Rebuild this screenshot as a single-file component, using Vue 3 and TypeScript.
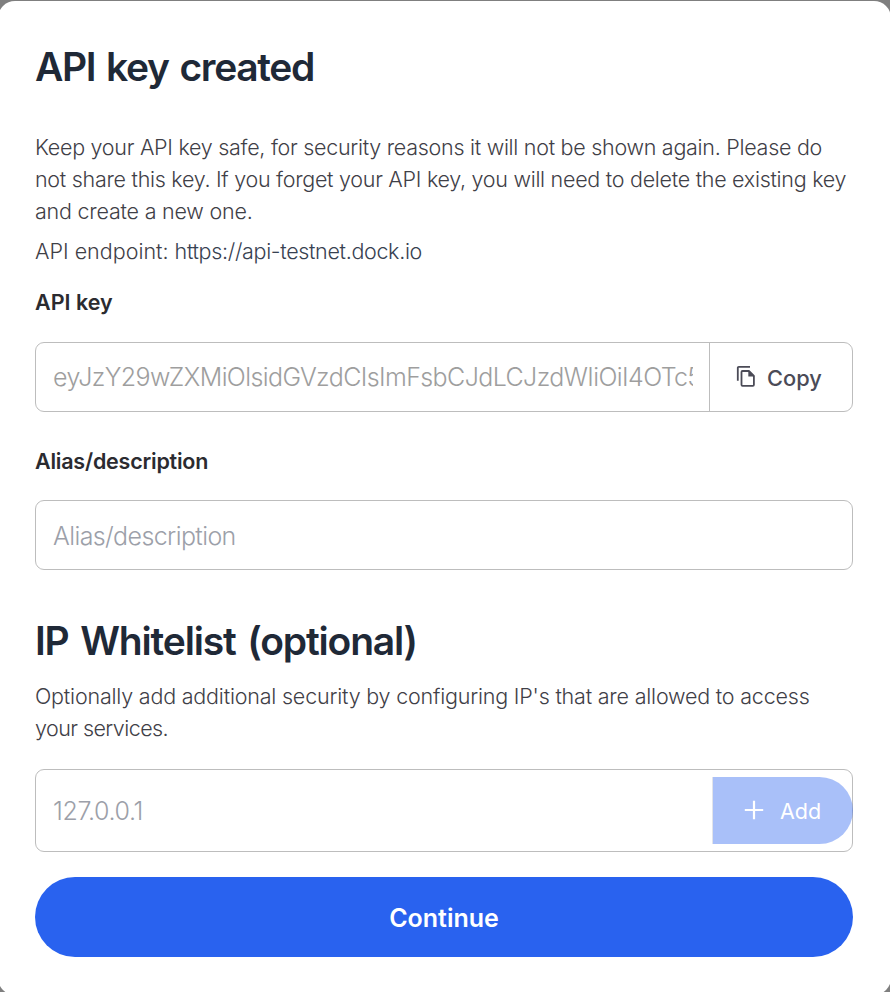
<script setup lang="ts">
import { ref } from 'vue'

const apiKey = ref('eyJzY29wZXMiOlsidGVzdCIsImFsbCJdLCJzdWIiOiI4OTc5')
const endpoint = 'https://api-testnet.dock.io'
const alias = ref('')
const ip = ref('')
</script>

<template>
  <div class="backdrop">
    <main class="modal">
      <h1 class="title">API key created</h1>

      <p class="text intro">
        <span class="line">Keep your API key safe, for security reasons it will not be shown again. Please do</span>
        <span class="line">not share this key. If you forget your API key, you will need to delete the existing key</span>
        <span class="line line-short">and create a new one.</span>
      </p>
      <p class="text endpoint">API endpoint: <a class="link">{{ endpoint }}</a></p>

      <label class="label" for="key">API key</label>
      <div class="field key-field">
        <input id="key" class="input key-input" :value="apiKey" disabled />
        <button class="copy" type="button">
          <svg class="copy-icon" width="20" height="23" viewBox="0 0 20 23" fill="none" stroke="currentColor" stroke-width="1.8">
            <path d="M14 1.8H2.8a1 1 0 0 0-1 1V15.8" />
            <path d="M12.9 6H6.5a1 1 0 0 0-1 1V19.8a1 1 0 0 0 1 1H16.9a1 1 0 0 0 1-1V11Z" stroke-linejoin="round" />
            <path d="M12.3 5.6V11.6H18.3Z" fill="currentColor" stroke="none" />
          </svg>
          <span>Copy</span>
        </button>
      </div>

      <label class="label alias-label" for="alias">Alias/description</label>
      <div class="field alias-field">
        <input id="alias" v-model="alias" class="input alias-input" placeholder="Alias/description" />
      </div>

      <h2 class="title subtitle">IP Whitelist (optional)</h2>
      <p class="text whitelist">
        <span class="line">Optionally add additional security by configuring IP's that are allowed to access</span>
        <span class="line line-last">your services.</span>
      </p>

      <div class="field ip-field">
        <input v-model="ip" class="input ip-input" placeholder="127.0.0.1" />
        <button class="add" type="button">
          <svg width="20" height="20" viewBox="0 0 20 20" stroke="currentColor" stroke-width="2.2">
            <path d="M10 .8v18.4M.8 10h18.4" />
          </svg>
          <span>Add</span>
        </button>
      </div>

      <button class="continue" type="button">Continue</button>
    </main>
  </div>
</template>

<style>
body {
  margin: 0;
  overflow: hidden;
}
</style>

<style scoped>
.backdrop {
  box-sizing: border-box;
  height: 992px;
  padding-top: 1px;
  overflow: hidden;
  background: #7f7f7f;
  font-family: Inter, "Liberation Sans", sans-serif;
}

.modal {
  box-sizing: border-box;
  display: flex;
  flex-direction: column;
  width: 893px;
  height: 994px;
  margin-left: -2px;
  padding: 42px 38px 0 37px;
  border-radius: 17px;
  background: #fff;
}

.title {
  margin: 0;
  color: #1f2937;
  font-size: 39px;
  font-weight: 600;
  line-height: 48px;
  letter-spacing: -1.36px;
  word-spacing: 2.4px;
  white-space: nowrap;
}

.text {
  margin: 0;
  color: #3f4047;
  font-size: 21.5px;
  font-weight: 300;
  line-height: 32px;
  white-space: nowrap;
}

.intro {
  margin-top: 40px;
  letter-spacing: -0.28px;
}

.line {
  display: block;
}

.line-short {
  letter-spacing: -0.22px;
}

.endpoint {
  margin-top: 8px;
}

.link {
  color: #374151;
  letter-spacing: -0.33px;
}

.label {
  margin-top: 19px;
  color: #2b2b30;
  font-size: 21.5px;
  font-weight: 600;
  line-height: 32px;
}

.alias-label {
  margin-top: 33px;
  letter-spacing: -0.22px;
}

.field {
  box-sizing: border-box;
  display: flex;
  align-items: center;
  height: 70px;
  border: 1px solid #bdbdbd;
  border-radius: 9px;
}

.key-field {
  margin-top: 24px;
}

.alias-field {
  margin-top: 23px;
}

.input {
  box-sizing: border-box;
  flex: 1;
  min-width: 0;
  height: 100%;
  margin: 0;
  padding: 0 16px 0 17px;
  border: 0;
  outline: 0;
  background: transparent;
  color: #9e9e9e;
  font: 300 25px Inter, "Liberation Sans", sans-serif;
}

.input::placeholder {
  color: #9ca0a9;
  opacity: 1;
}

.key-input {
  letter-spacing: -0.6px;
}

.alias-input {
  padding-top: 2px;
  letter-spacing: -0.62px;
}

.ip-input {
  letter-spacing: -0.35px;
}

.copy {
  box-sizing: border-box;
  display: flex;
  align-items: center;
  width: 143px;
  height: 70px;
  margin: -1px 0 0;
  padding: 2px 0 0 26px;
  gap: 11px;
  border: 0;
  border-left: 1px solid #bdbdbd;
  background: transparent;
  color: #4b4b57;
  font: 450 21.8px Inter, "Liberation Sans", sans-serif;
}

.copy-icon {
  margin-top: -2px;
}

.subtitle {
  margin-top: 47px;
  letter-spacing: -1.18px;
  word-spacing: 3px;
}

.whitelist {
  margin-top: 15px;
  letter-spacing: -0.2px;
}

.line-last {
  letter-spacing: -0.56px;
}

.ip-field {
  height: 83px;
  margin-top: 25px;
}

.add {
  box-sizing: border-box;
  display: flex;
  align-items: center;
  width: 141px;
  height: 67px;
  margin: 0 -1px 0 0;
  padding: 1px 0 0 31px;
  gap: 16px;
  border: 0;
  border-left: 1px solid #e2e4ea;
  border-radius: 0 34px 34px 0;
  background: rgba(41, 98, 240, 0.4);
  background-clip: padding-box;
  color: #fff;
  font: 400 21.5px Inter, "Liberation Sans", sans-serif;
}

.add svg {
  margin-top: -2px;
}

.continue {
  height: 80px;
  margin-top: 25px;
  padding: 2px 0 0;
  border: 0;
  border-radius: 40px;
  background: #2962ef;
  color: #fff;
  font: 600 25px Inter, "Liberation Sans", sans-serif;
}
</style>
